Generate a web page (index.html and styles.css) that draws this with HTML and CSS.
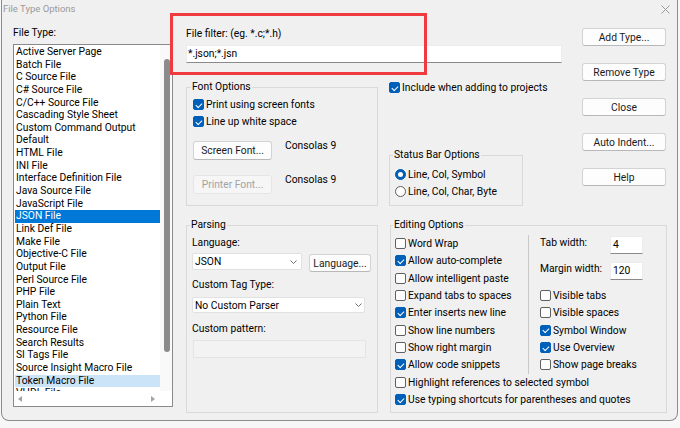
FILE: index.html
```html
<!DOCTYPE html>
<html>
<head>
<meta charset="utf-8">
<link rel="stylesheet" href="styles.css">
</head>
<body>
<div class="window">
  <div class="titlebar">
    <span class="title">File Type Options</span>
    <svg class="close" width="9" height="9" viewBox="0 0 9 9"><path d="M0.5 0.5L8.5 8.5M8.5 0.5L0.5 8.5" stroke="#9a9a9a" stroke-width="1" fill="none"/></svg>
  </div>
  <div class="content">
    <div class="types">
      <div class="label">File Type:</div>
      <div class="list">
        <div class="list-main">
          <div class="items">
            <div class="item">Active Server Page</div>
            <div class="item">Batch File</div>
            <div class="item">C Source File</div>
            <div class="item">C# Source File</div>
            <div class="item">C/C++ Source File</div>
            <div class="item">Cascading Style Sheet</div>
            <div class="item">Custom Command Output</div>
            <div class="item">Default</div>
            <div class="item">HTML File</div>
            <div class="item">INI File</div>
            <div class="item">Interface Definition File</div>
            <div class="item">Java Source File</div>
            <div class="item">JavaScript File</div>
            <div class="item sel">JSON File</div>
            <div class="item">Link Def File</div>
            <div class="item">Make File</div>
            <div class="item">Objective-C File</div>
            <div class="item">Output File</div>
            <div class="item">Perl Source File</div>
            <div class="item">PHP File</div>
            <div class="item">Plain Text</div>
            <div class="item">Python File</div>
            <div class="item">Resource File</div>
            <div class="item">Search Results</div>
            <div class="item">SI Tags File</div>
            <div class="item">Source Insight Macro File</div>
            <div class="item hover">Token Macro File</div>
            <div class="item">VHDL File</div>
          </div>
          <div class="vscroll"><div class="thumb"></div></div>
        </div>
        <div class="hscroll"><span class="arrow left"></span><span class="arrow right"></span></div>
      </div>
    </div>
    <div class="main">
      <div class="top">
        <div class="top-left">
          <div class="label filter-label">File filter: (eg. *.c;*.h)</div>
          <div class="input filter-input">*.json;*.jsn</div>
          <div class="options-row">
            <fieldset class="group font-group">
              <legend>Font Options</legend>
              <div class="check"><span class="box on"></span>Print using screen fonts</div>
              <div class="check"><span class="box on"></span>Line up white space</div>
              <div class="font-row first">
                <span class="btn font-btn">Screen Font...</span>
                <span class="font-name">Consolas 9</span>
              </div>
              <div class="font-row second">
                <span class="btn font-btn disabled">Printer Font...</span>
                <span class="font-name">Consolas 9</span>
              </div>
            </fieldset>
            <div class="side">
              <div class="check include"><span class="box on"></span>Include when adding to projects</div>
              <fieldset class="group status-group">
                <legend>Status Bar Options</legend>
                <div class="check"><span class="radio on"></span>Line, Col, Symbol</div>
                <div class="check"><span class="radio"></span>Line, Col, Char, Byte</div>
              </fieldset>
            </div>
          </div>
        </div>
        <div class="buttons">
          <span class="btn">Add Type...</span>
          <span class="btn">Remove Type</span>
          <span class="btn">Close</span>
          <span class="btn">Auto Indent...</span>
          <span class="btn">Help</span>
        </div>
      </div>
      <div class="bottom">
        <fieldset class="group parsing">
          <legend>Parsing</legend>
          <div class="label">Language:</div>
          <div class="lang-row">
            <div class="select lang-select"><span>JSON</span><svg width="7" height="4" viewBox="0 0 7 4"><path d="M0.5 0.5L3.5 3.5L6.5 0.5" fill="none" stroke="#707070" stroke-width="1"/></svg></div>
            <span class="btn lang-btn">Language...</span>
          </div>
          <div class="label tag-label">Custom Tag Type:</div>
          <div class="select tag-select"><span>No Custom Parser</span><svg width="7" height="4" viewBox="0 0 7 4"><path d="M0.5 0.5L3.5 3.5L6.5 0.5" fill="none" stroke="#707070" stroke-width="1"/></svg></div>
          <div class="label pattern-label">Custom pattern:</div>
          <div class="pattern-input"></div>
        </fieldset>
        <fieldset class="group editing">
          <legend>Editing Options</legend>
          <div class="edit-top">
            <div class="edit-col1">
              <div class="check"><span class="box"></span>Word Wrap</div>
              <div class="check"><span class="box on"></span>Allow auto-complete</div>
              <div class="check"><span class="box"></span>Allow intelligent paste</div>
              <div class="check"><span class="box"></span>Expand tabs to spaces</div>
              <div class="check"><span class="box on"></span>Enter inserts new line</div>
              <div class="check"><span class="box"></span>Show line numbers</div>
              <div class="check"><span class="box"></span>Show right margin</div>
              <div class="check"><span class="box on"></span>Allow code snippets</div>
            </div>
            <div class="edit-col2">
              <div class="widths">
                <div class="wrow"><span class="wlabel">Tab width:</span><span class="input small">4</span></div>
                <div class="wrow"><span class="wlabel">Margin width:</span><span class="input small">120</span></div>
              </div>
              <div class="check"><span class="box"></span>Visible tabs</div>
              <div class="check"><span class="box"></span>Visible spaces</div>
              <div class="check"><span class="box on"></span>Symbol Window</div>
              <div class="check"><span class="box on"></span>Use Overview</div>
              <div class="check"><span class="box"></span>Show page breaks</div>
            </div>
          </div>
          <div class="check"><span class="box"></span>Highlight references to selected symbol</div>
          <div class="check"><span class="box on"></span>Use typing shortcuts for parentheses and quotes</div>
        </fieldset>
      </div>
    </div>
  </div>
</div>
<div class="annot"></div>
</body>
</html>
```
FILE: styles.css
```css
* { box-sizing: border-box; }
html, body { margin: 0; padding: 0; }
fieldset { margin: 0; min-width: 0; }
body {
  width: 680px;
  height: 428px;
  background: #f7f7f7;
  position: relative;
  overflow: hidden;
  font-family: Roboto, "Noto Sans", sans-serif;
  font-size: 10.3px;
  color: #000;
}
.window {
  margin-left: 1px;
  width: 677px;
  height: 421px;
  border: 1px solid #8c8c8c;
  border-top: 0;
  border-radius: 0 0 8px 8px;
  background: #f0f0f0;
  display: flex;
  flex-direction: column;
  overflow: hidden;
}
.titlebar {
  height: 18px;
  flex: none;
  display: flex;
  align-items: center;
  padding-left: 1px;
  padding-right: 7px;
}
.title { color: #9a9a9a; line-height: 14px; font-size: 9.5px; }
.close { margin-left: auto; }
.content { display: flex; padding-left: 11px; }
.types { width: 160px; flex: none; }
.label { line-height: 14px; white-space: nowrap; }
.types .label { margin-top: 8px; }
.list {
  margin-top: 4px;
  height: 363px;
  border: 1px solid #8a8a8a;
  background: #fff;
  display: flex;
  flex-direction: column;
}
.list-main { flex: 1; display: flex; min-height: 0; }
.items { flex: 1; overflow: hidden; padding: 1px 0 0 1px; }
.item {
  height: 12.65px;
  line-height: 12.65px;
  padding-left: 1px;
  white-space: nowrap;
}
.item.sel { background: #0078d7; color: #fff; }
.item.hover { background: #cce4f7; }
.vscroll { width: 12px; flex: none; background: #f9f9f9; padding: 14px 2px 0 4px; }
.thumb { width: 6px; height: 293px; background: #8b8b8b; border-radius: 3px; }
.hscroll {
  height: 15px;
  flex: none;
  display: flex;
  align-items: center;
  justify-content: space-between;
  padding: 0 17px 0 4px;
}
.arrow { width: 0; height: 0; border-top: 3px solid transparent; border-bottom: 3px solid transparent; }
.arrow.left { border-right: 4px solid #a3a3a3; }
.arrow.right { border-left: 4px solid #a3a3a3; }

.main { margin-left: 13px; width: 482px; flex: none; }
.top { display: flex; }
.top-left { width: 376px; flex: none; }
.filter-label { margin-top: 9px; }
.input {
  background: #fff;
  border: 1px solid #ececec;
  border-bottom-color: #8a8a8a;
  line-height: 16px;
  white-space: nowrap;
}
.filter-input { margin-top: 4px; height: 18px; padding-left: 1px; }
.options-row { display: flex; align-items: flex-start; margin-top: 17px; }

.group {
  border: 1px solid #d9d9d9;
}
.group legend {
  padding: 0 1px;
  margin-left: -2px;
  line-height: 14px;
}
.check {
  display: flex;
  align-items: center;
  gap: 2px;
  height: 17px;
  white-space: nowrap;
}
.box {
  width: 11px;
  height: 11px;
  flex: none;
  border: 1px solid #606060;
  border-radius: 2px;
  background: #fdfdfd;
}
.box.on {
  background: #005fb8;
  border-color: #005fb8;
  display: flex;
  align-items: center;
  justify-content: center;
}
.box.on::after {
  content: "";
  width: 2.5px;
  height: 5px;
  border: solid #fff;
  border-width: 0 1px 1px 0;
  transform: translateY(-0.5px) rotate(45deg);
}
.radio {
  width: 11px;
  height: 11px;
  flex: none;
  border-radius: 50%;
  border: 1px solid #5c5c5c;
  background: #fff;
}
.radio.on {
  background: #005fb8;
  border-color: #005fb8;
  display: flex;
  align-items: center;
  justify-content: center;
}
.radio.on::after {
  content: "";
  width: 5px;
  height: 5px;
  border-radius: 50%;
  background: #fff;
}
.btn {
  display: flex;
  align-items: center;
  justify-content: center;
  height: 18px;
  background: #fdfdfd;
  border: 1px solid #d3d3d3;
  border-bottom-color: #b8b8b8;
  border-radius: 3px;
  white-space: nowrap;
  color: #1b1b1b;
}
.btn.disabled { background: #f6f6f6; border-color: #e5e5e5; color: #a2a2a2; }

.font-group { width: 192px; flex: none; padding: 2px 6px 11px 6px; }
.font-row { display: flex; align-items: flex-start; }
.font-row.first { margin-top: 11px; }
.font-row.second { margin-top: 15px; }
.font-btn { width: 79px; height: 19px; }
.font-name { margin-left: 13px; margin-top: -2px; line-height: 14px; }

.side { margin-left: 11px; width: 134px; flex: none; }
.include { height: 15px; }
.status-group { margin-top: 53px; padding: 4px 5px 5px 5px; }

.buttons {
  margin-left: 20px;
  width: 84px;
  flex: none;
  padding-top: 10px;
  display: flex;
  flex-direction: column;
  gap: 17px;
}

.bottom { display: flex; margin-top: 12px; }
.parsing { width: 192px; flex: none; padding: 4px 5px 0 5px; }
.lang-row { display: flex; align-items: flex-start; margin-top: 3px; }
.select {
  display: flex;
  align-items: center;
  justify-content: space-between;
  background: #fff;
  border: 1px solid #e1e1e1;
  border-radius: 2px;
  padding-left: 2px;
  white-space: nowrap;
}
.lang-select { width: 110px; height: 17px; padding-right: 4px; }
.lang-btn { width: 62px; height: 18px; margin-left: 7px; margin-top: 1px; }
.tag-label { margin-top: 6px; }
.tag-select { width: 173px; height: 16px; margin-top: 5px; padding-right: 2px; }
.pattern-label { margin-top: 9px; }
.pattern-input {
  margin-top: 4px;
  margin-left: 1px;
  width: 173px;
  height: 18px;
  background: #f3f3f3;
  border: 1px solid #e4e4e4;
}

.editing { width: 277px; flex: none; margin-left: 12px; padding: 3px 4px 4px 4px; }
.editing .check { height: 17.33px; }
.edit-top { display: flex; height: 138.67px; }
.edit-col1 { width: 133px; flex: none; }
.edit-col2 { flex: 1; border-left: 1px solid #c9c9c9; padding-left: 11px; }
.widths { height: 52px; padding-top: 1px; display: flex; flex-direction: column; gap: 7.7px; }
.wrow { display: flex; align-items: flex-start; height: 18px; }
.wlabel { width: 70px; flex: none; line-height: 13px; white-space: nowrap; }
.input.small { width: 33px; height: 18px; padding-left: 2px; }

.annot {
  position: absolute;
  left: 170px;
  top: 12.5px;
  width: 257px;
  height: 62.5px;
  border: 3px solid #ef3a3f;
}
```
